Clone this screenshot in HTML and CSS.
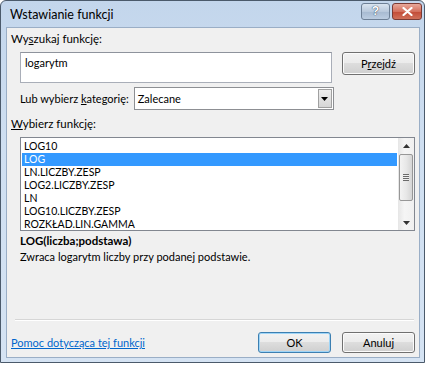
FILE: index.html
```html
<!DOCTYPE html>
<html lang="pl">
<head>
  <meta charset="UTF-8">
  <title>Wstawianie funkcji</title>
  <link rel="stylesheet" href="styles.css">
</head>
<body>
  <div class="window">
    <div class="titlebar">
      <span class="title">Wstawianie funkcji</span>
      <div class="caption-btns">
        <span class="cap-btn help">?</span>
        <span class="cap-btn close">
          <svg width="11" height="9" viewBox="0 0 11 9"><path d="M1.5 1 L9.5 8 M9.5 1 L1.5 8" stroke="#fff" stroke-width="2.2" stroke-linecap="round"/></svg>
        </span>
      </div>
    </div>
    <div class="client">
      <div class="label">Wy<u>s</u>zukaj funkcję:</div>
      <div class="search-row">
        <div class="textbox">logarytm</div>
        <button class="btn">P<u>r</u>zejdź</button>
      </div>
      <div class="category-row">
        <span>Lub wybierz <u>k</u>ategorię:</span>
        <div class="combo">
          <span>Zalecane</span>
          <span class="combo-btn">
            <svg width="7" height="4" viewBox="0 0 7 4"><path d="M0 0 H7 L3.5 4 Z" fill="#000"/></svg>
          </span>
        </div>
      </div>
      <div class="label second"><u>W</u>ybierz funkcję:</div>
      <div class="listbox">
        <ul class="items">
          <li>LOG10</li>
          <li class="selected">LOG</li>
          <li>LN.LICZBY.ZESP</li>
          <li>LOG2.LICZBY.ZESP</li>
          <li>LN</li>
          <li>LOG10.LICZBY.ZESP</li>
          <li>ROZKŁAD.LIN.GAMMA</li>
        </ul>
        <div class="scrollbar">
          <svg class="arrow" width="7" height="4" viewBox="0 0 7 4"><path d="M3.5 0 L7 4 H0 Z" fill="#333"/></svg>
          <div class="thumb">
            <span class="grip"></span>
          </div>
          <svg class="arrow" width="7" height="4" viewBox="0 0 7 4"><path d="M0 0 H7 L3.5 4 Z" fill="#333"/></svg>
        </div>
      </div>
      <div class="syntax">LOG(liczba;podstawa)</div>
      <div class="desc">Zwraca logarytm liczby przy podanej podstawie.</div>
      <div class="separator"></div>
      <div class="footer">
        <a class="help-link" href="#">Pomoc dotycząca tej funkcji</a>
        <div class="footer-btns">
          <button class="btn default">OK</button>
          <button class="btn">Anuluj</button>
        </div>
      </div>
    </div>
  </div>
</body>
</html>
```

FILE: styles.css
```css
body {
  margin: 0;
  background: #fff;
  font-family: Lato, 'Liberation Sans', Arial, sans-serif;
  font-size: 11px;
  color: #000;
}
u {
  text-decoration: underline;
  text-underline-offset: 1px;
}
.window {
  width: 423px;
  height: 361px;
  border: 1px solid #4b5a6b;
  border-radius: 6px 6px 0 0;
  background: linear-gradient(180deg, #c3d6ec 0%, #cfdff1 40%, #d5e3f3 100%);
  display: flex;
  flex-direction: column;
}
.titlebar {
  height: 26px;
  display: flex;
  align-items: flex-start;
  justify-content: space-between;
  padding: 0 2px 0 9px;
}
.title {
  font-size: 12.5px;
  line-height: 27px;
  color: #000;
}
.caption-btns {
  display: flex;
  gap: 2px;
  margin-top: 2px;
}
.cap-btn {
  width: 27px;
  height: 15px;
  border: 1px solid #6d7f95;
  border-radius: 3px;
  display: flex;
  align-items: center;
  justify-content: center;
}
.help {
  background: linear-gradient(180deg, #d9e4f0 0%, #b9c9dc 50%, #a6b9d0 51%, #bccde1 100%);
  color: #fff;
  font-family: 'Liberation Sans', Arial, sans-serif;
  font-weight: bold;
  font-size: 12px;
  text-shadow: 0 0 1px #33455c, 0 0 1px #33455c;
  line-height: 15px;
}
.close {
  width: 28px;
  border-color: #7a3a34;
  background: linear-gradient(180deg, #e8a89a 0%, #d4705e 50%, #c24a36 51%, #d0705a 100%);
}
.client {
  flex: 1;
  margin: 0 4px 4px 5px;
  border: 1px solid #9aaec6;
  background: #f0f0f0;
  padding: 3px 3px 0 4px;
  display: flex;
  flex-direction: column;
}
.label {
  height: 16px;
  line-height: 16px;
  font-size: 11.5px;
}
.label.second {
  margin-top: 6px;
}
.search-row {
  display: flex;
  align-items: flex-start;
  gap: 10px;
  margin: 5px 0 0 9px;
}
.textbox {
  width: 302px;
  height: 29px;
  border: 1px solid #a9aeb8;
  border-top-color: #8e939c;
  background: #fff;
  padding: 0 4px;
  line-height: 20px;
}
.btn {
  font-family: Lato, 'Liberation Sans', Arial, sans-serif;
  font-size: 11px;
  color: #000;
  width: 73px;
  height: 23px;
  padding: 0;
  border: 1px solid #707070;
  border-radius: 3px;
  background: linear-gradient(180deg, #f2f2f2 0%, #ebebeb 49%, #dddddd 50%, #cfcfcf 100%);
  box-shadow: inset 0 0 0 1px #fbfbfb;
}
.category-row {
  display: flex;
  align-items: center;
  gap: 5px;
  margin: 4px 0 0 9px;
}
.combo {
  width: 198px;
  height: 21px;
  border: 1px solid #8d8f93;
  background: #fff;
  display: flex;
  align-items: center;
  justify-content: space-between;
}
.combo > span:first-child {
  padding-left: 3px;
}
.combo-btn {
  width: 14px;
  height: 19px;
  margin-right: 1px;
  border: 1px solid #a0a0a0;
  box-sizing: border-box;
  background: linear-gradient(180deg, #eeeeee, #d6d6d6);
  display: flex;
  align-items: center;
  justify-content: center;
}
.listbox {
  margin: 5px 0 0 9px;
  width: 393px;
  height: 92px;
  border: 1px solid #828790;
  background: #fff;
  display: flex;
}
.items {
  list-style: none;
  margin: 0;
  padding: 2px 0 0 1px;
  flex: 1;
  font-family: Lato, 'Liberation Sans', Arial, sans-serif;
  font-size: 10.5px;
}
.items li {
  height: 13px;
  line-height: 13px;
  padding-left: 2px;
}
.items li.selected {
  background: #3399ff;
  color: #fff;
  margin-right: 1px;
}
.scrollbar {
  width: 16px;
  background: linear-gradient(90deg, #e6e6e6, #f5f5f5 40%, #f0f0f0);
  display: flex;
  flex-direction: column;
  align-items: center;
  justify-content: space-between;
  padding: 6px 0 5px;
  box-sizing: border-box;
}
.thumb {
  width: 14px;
  height: 47px;
  margin-top: -2px;
  margin-bottom: 12px;
  border: 1px solid #979797;
  border-radius: 2px;
  box-sizing: border-box;
  background: linear-gradient(90deg, #f3f3f3, #e8e8e8 50%, #d5d5d5);
  display: flex;
  align-items: center;
  justify-content: center;
}
.grip {
  width: 6px;
  height: 7px;
  background: repeating-linear-gradient(180deg, #6b6b6b 0 1px, #f0f0f0 1px 2px);
}
.syntax {
  font-weight: bold;
  font-size: 11.5px;
  margin: 2px 0 0 9px;
  line-height: 16px;
}
.desc {
  margin: 0 0 0 9px;
  line-height: 16px;
}
.separator {
  margin: auto 2px 0 4px;
  border-top: 1px solid #d6d6d6;
  border-bottom: 1px solid #fff;
}
.footer {
  display: flex;
  align-items: center;
  justify-content: space-between;
  margin: 11px 0 4px 0;
}
.help-link {
  color: #0066cc;
  text-decoration: underline;
}
.footer-btns {
  display: flex;
  gap: 11px;
  margin-right: 1px;
}
.footer-btns .btn {
  height: 21px;
}
.btn.default {
  border-color: #3c7fb1;
  box-shadow: inset 0 0 0 1px #9fd5f7;
}
```
